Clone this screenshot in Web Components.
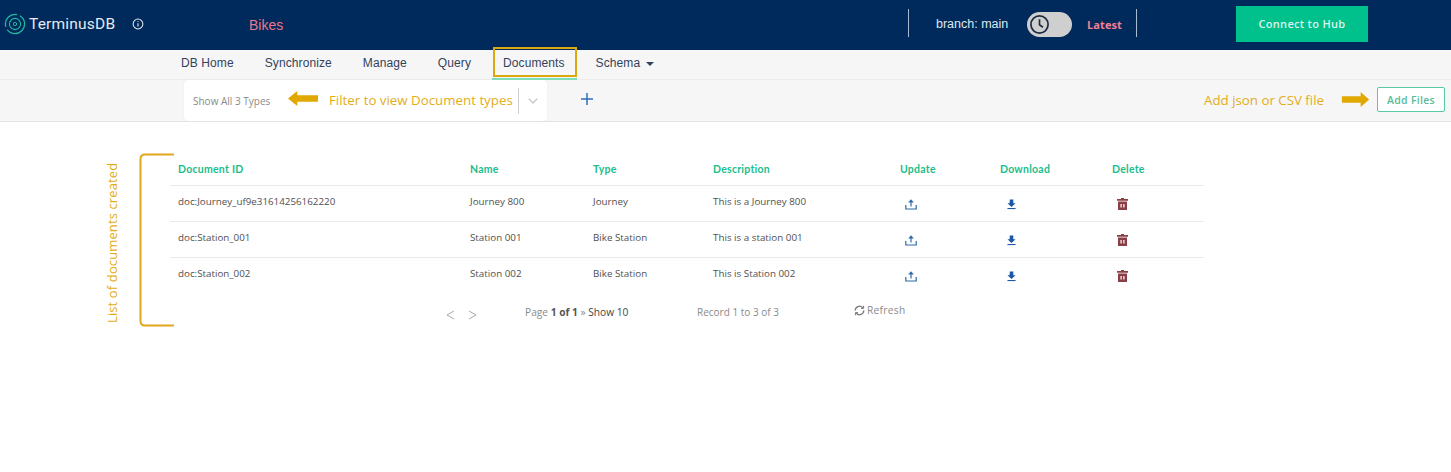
<!DOCTYPE html>
<html>
<head>
<meta charset="utf-8">
<title>TerminusDB</title>
<style>
html, body { margin: 0; padding: 0; background: #fff; }
body { width: 1451px; height: 472px; overflow: hidden; position: relative; font-family: "Open Sans", sans-serif; }
</style>
</head>
<body>
<tdb-header></tdb-header>
<tdb-nav>
    <tdb-tab>DB Home</tdb-tab>
    <tdb-tab>Synchronize</tdb-tab>
    <tdb-tab>Manage</tdb-tab>
    <tdb-tab>Query</tdb-tab>
    <tdb-tab active>Documents</tdb-tab>
    <tdb-tab caret>Schema</tdb-tab>
</tdb-nav>
<tdb-toolbar></tdb-toolbar>
<tdb-table>
    <tdb-row id-text="doc:Journey_uf9e31614256162220" name="Journey 800" type="Journey" desc="This is a Journey 800"></tdb-row>
    <tdb-row id-text="doc:Station_001" name="Station 001" type="Bike Station" desc="This is a station 001"></tdb-row>
    <tdb-row id-text="doc:Station_002" name="Station 002" type="Bike Station" desc="This is Station 002"></tdb-row>
</tdb-table>
<tdb-notes></tdb-notes>

<script>
class TdbHeader extends HTMLElement {
    constructor() {
        super();
        this.attachShadow({ mode: 'open' }).innerHTML = `
            <style>
            :host { display: flex; align-items: center; height: 50px; background: #002a5b; color: #fff; font-family: "Liberation Sans", sans-serif; }
            .logo { display: flex; align-items: center; margin: -3px 0 0 4px; width: 245px; }
            .logo b { font: 400 15.5px Roboto, sans-serif; color: #e4eaf0; margin-left: 3px; width: 103px; letter-spacing: .2px; }
            .logo svg { display: block; }
            .db { color: #e8778f; font-size: 14px; width: 659px; margin-top: -1px; }
            .sep { width: 1px; height: 28px; background: #a9bdd2; margin-top: -4px; }
            .branch { font-size: 12.5px; color: #dfe8f0; margin: -3px 0 0 27px; width: 91px; }
            .switch { width: 45px; height: 25px; border-radius: 13px; background: #d0cfcf; display: flex; align-items: center; padding-left: 2px; box-sizing: border-box; margin-top: -2px; }
            .latest { font: 700 11px "Open Sans", sans-serif; color: #f08095; margin: -2px 14px 0 15px; letter-spacing: .1px; }
            .hub { margin: -3px 0 0 99px; width: 132px; height: 36px; display: flex; align-items: center; justify-content: center; background: #00c08b; color: #d9f5ec; font: 600 11px "Open Sans", sans-serif; letter-spacing: .3px; }
            </style>
            <div class="logo">
                <svg width="22" height="22" viewBox="0 0 22 22" fill="none" stroke="#1fb9a0">
                    <circle cx="11" cy="11" r="9.6" stroke-width="1.3" stroke-dasharray="24 3 20 3"/>
                    <circle cx="11" cy="11" r="5.6" stroke-width="1.1"/>
                    <circle cx="11" cy="11" r="1.7" stroke-width="1"/>
                </svg>
                <b>TerminusDB</b>
                <svg width="12" height="12" viewBox="0 0 13 13" fill="none" stroke="#e4eaf0">
                    <circle cx="6.5" cy="6.5" r="5.3" stroke-width="1.1"/>
                    <path d="M6.5 5.600v3.600M6.500 3.400v1" stroke-width="1.2"/>
                </svg>
            </div>
            <div class="db">Bikes</div>
            <div class="sep"></div>
            <div class="branch">branch: main</div>
            <div class="switch">
                <svg width="21" height="21" viewBox="0 0 21 21" fill="none" stroke="#1d2d44" stroke-width="1.7">
                    <circle cx="10.5" cy="10.5" r="8.6"/>
                    <path d="M10.5 5.200v5.600l3.400 2.400"/>
                </svg>
            </div>
            <div class="latest">Latest</div>
            <div class="sep"></div>
            <div class="hub">Connect to Hub</div>
        `;
    }
}

class TdbNav extends HTMLElement {
    constructor() {
        super();
        this.attachShadow({ mode: 'open' }).innerHTML = `
            <style>
            :host { display: flex; height: 29px; padding-left: 165px; background: #f6f6f6; border-bottom: 1px solid #ececec; }
            </style>
            <slot></slot>
        `;
    }
}

class TdbTab extends HTMLElement {
    constructor() {
        super();
        this.attachShadow({ mode: 'open' }).innerHTML = `
            <style>
            :host { display: flex; align-items: center; box-sizing: border-box; height: 29px; padding: 0 16px 3px 16px; margin-right: -1px; color: #33425b; font: 12px "Liberation Sans", sans-serif; letter-spacing: .1px; position: relative; }
            :host([active]) { padding: 0 12px 3px 10px; margin: 0 6px 0 7px; }
            :host([active])::before { content: ""; position: absolute; left: 0; right: 0; top: -3px; bottom: 2px; border: 2px solid #dba80e; }
            :host([active])::after { content: ""; position: absolute; left: -1px; right: 0; bottom: -1px; height: 2px; background: #7fdcb8; }
            :host([caret]) { margin-left: -3px; }
            .caret { display: none; margin-left: 6px; margin-top: 2px; border: 4px solid transparent; border-top-color: #33425b; border-bottom: 0; }
            :host([caret]) .caret { display: block; }
            </style>
            <slot></slot><span class="caret"></span>
        `;
    }
}

class TdbToolbar extends HTMLElement {
    constructor() {
        super();
        this.attachShadow({ mode: 'open' }).innerHTML = `
            <style>
            :host { display: flex; align-items: center; height: 41px; background: #f6f6f6; border-bottom: 1px solid #e4e4e4; padding-left: 184px; padding-right: 6px; }
            .select { display: flex; align-items: center; width: 363px; height: 41px; background: #fff; border-radius: 4px; box-sizing: border-box; padding-left: 9px; box-shadow: 0 0 1px #ddd; }
            .label { font: 10px "Open Sans", sans-serif; color: #8a8a8a; width: 325px; }
            .bar { width: 1px; height: 26px; background: #cfcfcf; }
            .chev { margin-left: 9px; display: block; }
            .plus { margin: -4px 0 0 34px; display: block; }
            .add { margin-left: auto; width: 68px; height: 25px; box-sizing: border-box; border: 1px solid #56c9a6; border-radius: 2px; background: #fff; color: #58bb9c; font: 600 10.5px "Open Sans", sans-serif; letter-spacing: .3px; display: flex; align-items: center; justify-content: center; margin-top: -2px; }
            </style>
            <div class="select">
                <div class="label">Show All 3 Types</div>
                <div class="bar"></div>
                <svg class="chev" width="10" height="6" viewBox="0 0 10 6" fill="none" stroke="#c8c8c8" stroke-width="1.4"><path d="M.8.8 5 5l4.200-4.200"/></svg>
            </div>
            <svg class="plus" width="12" height="12" viewBox="0 0 12 12" fill="none" stroke="#2f6fb5" stroke-width="1.5"><path d="M6 0v12M0 6h12"/></svg>
            <div class="add">Add Files</div>
        `;
    }
}

class TdbTable extends HTMLElement {
    constructor() {
        super();
        this.attachShadow({ mode: 'open' }).innerHTML = `
            <style>
            :host { display: block; width: 1034px; margin: 32px 0 0 170px; }
            .head { display: grid; grid-template-columns: 292px 123px 120px 187px 100px 112px 1fr; height: 30px; padding: 0 0 1px 8px; align-items: center; border-bottom: 1px solid #e9e9ec; font: 700 10.5px Lato, sans-serif; color: #1cbd8c; letter-spacing: .25px; }
            .pager { display: flex; align-items: center; height: 36px; margin-top: 1px; font: 10.2px "Open Sans", sans-serif; color: #8a8a8a; }
            .nav { margin: 6px 0 0 276px; width: 79px; display: flex; gap: 13px; }
            .nav svg { display: block; }
            .page { width: 172px; }
            .page b { color: #555; font-weight: 700; }
            .page span { color: #444; }
            .rec { width: 157px; font-size: 10px; }
            .ref { display: flex; align-items: center; gap: 2px; margin-top: -4px; letter-spacing: .3px; }
            </style>
            <div class="head">
                <div>Document ID</div><div>Name</div><div>Type</div><div>Description</div><div>Update</div><div>Download</div><div>Delete</div>
            </div>
            <slot></slot>
            <div class="pager">
                <div class="nav">
                    <svg width="9" height="10" viewBox="0 0 9 10" fill="none" stroke="#a9a9a9" stroke-width="1"><path d="M8 1 1 5l7 4"/></svg>
                    <svg width="9" height="10" viewBox="0 0 9 10" fill="none" stroke="#a9a9a9" stroke-width="1"><path d="m1 1 7 4-7 4"/></svg>
                </div>
                <div class="page">Page <b>1 of 1</b> » <span>Show 10</span></div>
                <div class="rec">Record 1 to 3 of 3</div>
                <div class="ref">
                    <svg width="11" height="11" viewBox="0 0 11 11" fill="none" stroke="#777" stroke-width="1.3"><path d="M1.200 5.500a4.300 4.300 0 0 1 7.500-2.800M9.800 5.500a4.300 4.300 0 0 1-7.500 2.800"/><path d="M9.600.8v2.600H7M1.400 10.200V7.600H4" stroke-width="1"/></svg>
                    Refresh
                </div>
            </div>
        `;
    }
}

class TdbRow extends HTMLElement {
    constructor() {
        super();
        this.attachShadow({ mode: 'open' });
    }
    connectedCallback() {
        const get = n => this.getAttribute(n) || '';
        this.shadowRoot.innerHTML = `
            <style>
            :host { display: grid; grid-template-columns: 292px 123px 120px 187px 100px 112px 1fr; align-items: center; height: 31px; padding: 0 0 4px 8px; border-bottom: 1px solid #e9e9ec; font: 9.8px "Open Sans", sans-serif; color: #4f4f4f; }
            :host(:last-of-type) { border-bottom: 0; }
            svg { display: block; margin: 5px 0 0 5px; }
            .dl { margin-left: 7px; }
            .del { margin-left: 5px; }
            </style>
            <div>${get('id-text')}</div>
            <div>${get('name')}</div>
            <div>${get('type')}</div>
            <div>${get('desc')}</div>
            <svg width="12" height="11" viewBox="0 0 12 11" fill="none" stroke="#2c6ba8" stroke-width="1.2"><path d="M.8 6v4h10.400V6"/><path d="M6 7.500V1.200"/><path d="M6 .2 8.800 3.400H3.200z" fill="#2c6ba8" stroke="none"/></svg>
            <svg class="dl" width="9" height="11" viewBox="0 0 10 11"><path d="M3 0h4v4h2.500L5 8.200.5 4H3z" fill="#1d57a8"/><path d="M.5 10h9" stroke="#1d57a8" stroke-width="1.200"/></svg>
            <svg class="del" width="11" height="12" viewBox="0 0 11 12" fill="#8a3f47"><path d="M4 0h3v1h4v1.800H0V1h4z"/><path fill-rule="evenodd" d="M1 3.500h9V12H1zM3.500 6v3.500h1.200V6zM6.300 6v3.500h1.200V6z"/></svg>
        `;
    }
}

class TdbNotes extends HTMLElement {
    constructor() {
        super();
        this.attachShadow({ mode: 'open' }).innerHTML = `
            <style>
            :host { position: absolute; inset: 0; pointer-events: none; font: 13.3px "Open Sans", sans-serif; color: #e3ad17; }
            .n { position: absolute; white-space: nowrap; }
            svg { position: absolute; display: block; }
            .v { left: 105px; top: 323px; font-size: 13px; transform-origin: 0 0; transform: rotate(-90deg); letter-spacing: .12px; line-height: 14px; }
            </style>
            <svg style="left:288px;top:91px" width="30" height="15" viewBox="0 0 29 16" preserveAspectRatio="none"><path d="M0 8 9 0v4.500h20v7H9V16z" fill="#e0a800"/></svg>
            <div class="n" style="left:329px;top:91px">Filter to view Document types</div>
            <div class="n" style="left:1204px;top:91px">Add json or CSV file</div>
            <svg style="left:1341px;top:92px" width="29" height="15" viewBox="0 0 29 16"><path d="M29 8 20 0v4.500H0v7h20V16z" fill="#e0a800"/></svg>
            <div class="n v">List of documents created</div>
            <svg style="left:138px;top:153px" width="37" height="174" viewBox="0 0 37 174" fill="none" stroke="#e0a81c" stroke-width="2"><path d="M36 1.500H7Q2.500 1.500 2.500 6v162q0 4.500 4.500 4.500h29"/></svg>
        `;
    }
}

customElements.define('tdb-header', TdbHeader);
customElements.define('tdb-nav', TdbNav);
customElements.define('tdb-tab', TdbTab);
customElements.define('tdb-toolbar', TdbToolbar);
customElements.define('tdb-table', TdbTable);
customElements.define('tdb-row', TdbRow);
customElements.define('tdb-notes', TdbNotes);
</script>
</body>
</html>
